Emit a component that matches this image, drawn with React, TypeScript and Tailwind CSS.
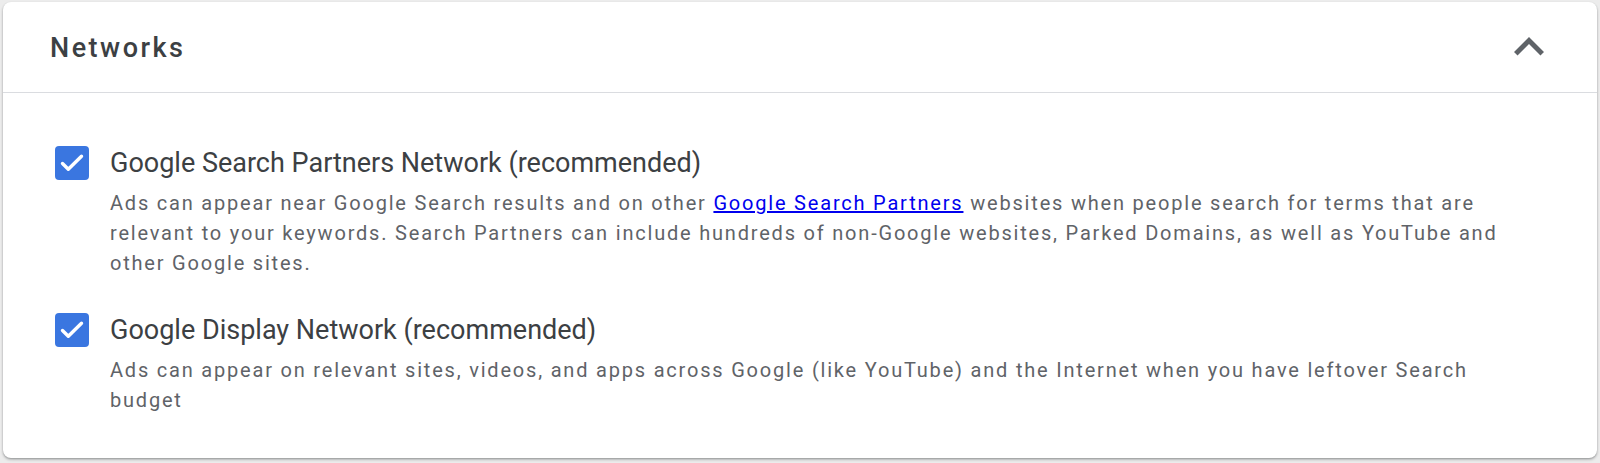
import React from "react";

function CheckBox() {
  return (
    <div className="h-[34px] w-[34px] shrink-0 rounded-[4px] bg-[#3a76e0]">
      <svg width="34" height="34" viewBox="0 0 34 34" fill="none">
        <path d="M7.5 17.5l5.8 5.8L26.5 10.2" stroke="#ffffff" strokeWidth="3.4" strokeLinecap="round" strokeLinejoin="round" />
      </svg>
    </div>
  );
}

function Option({ title, children }: { title: string; children: React.ReactNode }) {
  return (
    <div className="flex items-start gap-[21px] pl-[52px]">
      <CheckBox />
      <div className="w-[1410px]">
        <p className="text-[27px] leading-[34px] text-[#3c4043]">{title}</p>
        <p className="mt-[8px] text-[20px] leading-[30px] tracking-[1.8px] text-[#5f6368]">{children}</p>
      </div>
    </div>
  );
}

export default function App() {
  return (
    <div className="h-[463px] overflow-hidden bg-[#ececec] px-[3px] pt-[2px] font-['Roboto',sans-serif]">
      <div className="h-[456px] rounded-[8px] bg-white shadow-[0_1px_2px_rgba(60,64,67,0.35),0_2px_3px_rgba(60,64,67,0.2)]">
        <div className="flex h-[91px] items-center justify-between border-b border-[#dadce0] pl-[47px] pr-[38px]">
          <h2 className="mt-[2px] text-[27px] leading-[32px] font-medium tracking-[2.5px] text-[#3c4043]">Networks</h2>
          <svg width="60" height="60" viewBox="0 0 24 24" fill="#5f6368">
            <path d="M12 8l-6 6 1.41 1.41L12 10.83l4.59 4.58L18 14z" />
          </svg>
        </div>
        <div className="flex flex-col gap-[35px] pt-[53px]">
          <Option title="Google Search Partners Network (recommended)">
            Ads can appear near Google Search results and on other{" "}
            <a href="#" className="text-[#0000ee] underline">
              Google Search Partners
            </a>{" "}
            websites when people search for terms that are relevant to your keywords. Search Partners can include
            hundreds of non-Google websites, Parked Domains, as well as YouTube and other Google sites.
          </Option>
          <Option title="Google Display Network (recommended)">
            Ads can appear on relevant sites, videos, and apps across Google (like YouTube) and the Internet when you
            have leftover Search budget
          </Option>
        </div>
      </div>
    </div>
  );
}
